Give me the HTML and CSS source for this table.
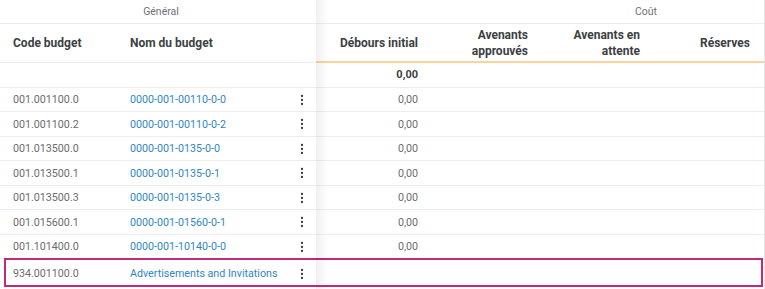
FILE: index.html
```html
<!DOCTYPE html>
<html lang="fr">
<head>
<meta charset="utf-8">
<title>Budget</title>
<link rel="stylesheet" href="styles.css">
</head>
<body>
<div class="grid">
  <div class="row group-row">
    <div class="g-general">Général</div>
    <div class="g-cout">Coût</div>
  </div>
  <div class="row head-row">
    <div class="cell c-code">Code budget</div>
    <div class="cell c-name">Nom du budget</div>
    <div class="cell c-menu"></div>
    <div class="cell c-num w-116">Débours initial</div>
    <div class="cell c-num w-110">Avenants<br>approuvés</div>
    <div class="cell c-num w-112">Avenants en<br>attente</div>
    <div class="cell c-num w-110">Réserves</div>
  </div>
  <div class="row total-row">
    <div class="cell c-code"></div>
    <div class="cell c-name"></div>
    <div class="cell c-menu"></div>
    <div class="cell c-num w-116">0,00</div>
    <div class="cell c-num w-110"></div>
    <div class="cell c-num w-112"></div>
    <div class="cell c-num w-110"></div>
  </div>

  <div class="row data-row">
    <div class="cell c-code">001.001100.0</div>
    <div class="cell c-name"><a class="link">0000-001-00110-0-0</a></div>
    <div class="cell c-menu"><svg class="kebab" width="4" height="12" viewBox="0 0 4 12"><circle cx="2" cy="2" r="1.15"/><circle cx="2" cy="6" r="1.15"/><circle cx="2" cy="10" r="1.15"/></svg></div>
    <div class="cell c-num w-116">0,00</div>
    <div class="cell c-num w-110"></div>
    <div class="cell c-num w-112"></div>
    <div class="cell c-num w-110"></div>
  </div>
  <div class="row data-row">
    <div class="cell c-code">001.001100.2</div>
    <div class="cell c-name"><a class="link">0000-001-00110-0-2</a></div>
    <div class="cell c-menu"><svg class="kebab" width="4" height="12" viewBox="0 0 4 12"><circle cx="2" cy="2" r="1.15"/><circle cx="2" cy="6" r="1.15"/><circle cx="2" cy="10" r="1.15"/></svg></div>
    <div class="cell c-num w-116">0,00</div>
    <div class="cell c-num w-110"></div>
    <div class="cell c-num w-112"></div>
    <div class="cell c-num w-110"></div>
  </div>
  <div class="row data-row">
    <div class="cell c-code">001.013500.0</div>
    <div class="cell c-name"><a class="link">0000-001-0135-0-0</a></div>
    <div class="cell c-menu"><svg class="kebab" width="4" height="12" viewBox="0 0 4 12"><circle cx="2" cy="2" r="1.15"/><circle cx="2" cy="6" r="1.15"/><circle cx="2" cy="10" r="1.15"/></svg></div>
    <div class="cell c-num w-116">0,00</div>
    <div class="cell c-num w-110"></div>
    <div class="cell c-num w-112"></div>
    <div class="cell c-num w-110"></div>
  </div>
  <div class="row data-row">
    <div class="cell c-code">001.013500.1</div>
    <div class="cell c-name"><a class="link">0000-001-0135-0-1</a></div>
    <div class="cell c-menu"><svg class="kebab" width="4" height="12" viewBox="0 0 4 12"><circle cx="2" cy="2" r="1.15"/><circle cx="2" cy="6" r="1.15"/><circle cx="2" cy="10" r="1.15"/></svg></div>
    <div class="cell c-num w-116">0,00</div>
    <div class="cell c-num w-110"></div>
    <div class="cell c-num w-112"></div>
    <div class="cell c-num w-110"></div>
  </div>
  <div class="row data-row">
    <div class="cell c-code">001.013500.3</div>
    <div class="cell c-name"><a class="link">0000-001-0135-0-3</a></div>
    <div class="cell c-menu"><svg class="kebab" width="4" height="12" viewBox="0 0 4 12"><circle cx="2" cy="2" r="1.15"/><circle cx="2" cy="6" r="1.15"/><circle cx="2" cy="10" r="1.15"/></svg></div>
    <div class="cell c-num w-116">0,00</div>
    <div class="cell c-num w-110"></div>
    <div class="cell c-num w-112"></div>
    <div class="cell c-num w-110"></div>
  </div>
  <div class="row data-row">
    <div class="cell c-code">001.015600.1</div>
    <div class="cell c-name"><a class="link">0000-001-01560-0-1</a></div>
    <div class="cell c-menu"><svg class="kebab" width="4" height="12" viewBox="0 0 4 12"><circle cx="2" cy="2" r="1.15"/><circle cx="2" cy="6" r="1.15"/><circle cx="2" cy="10" r="1.15"/></svg></div>
    <div class="cell c-num w-116">0,00</div>
    <div class="cell c-num w-110"></div>
    <div class="cell c-num w-112"></div>
    <div class="cell c-num w-110"></div>
  </div>
  <div class="row data-row">
    <div class="cell c-code">001.101400.0</div>
    <div class="cell c-name"><a class="link">0000-001-10140-0-0</a></div>
    <div class="cell c-menu"><svg class="kebab" width="4" height="12" viewBox="0 0 4 12"><circle cx="2" cy="2" r="1.15"/><circle cx="2" cy="6" r="1.15"/><circle cx="2" cy="10" r="1.15"/></svg></div>
    <div class="cell c-num w-116">0,00</div>
    <div class="cell c-num w-110"></div>
    <div class="cell c-num w-112"></div>
    <div class="cell c-num w-110"></div>
  </div>
  <div class="row data-row selected-row">
    <div class="cell c-code">934.001100.0</div>
    <div class="cell c-name"><a class="link">Advertisements and Invitations</a></div>
    <div class="cell c-menu"><svg class="kebab" width="4" height="12" viewBox="0 0 4 12"><circle cx="2" cy="2" r="1.15"/><circle cx="2" cy="6" r="1.15"/><circle cx="2" cy="10" r="1.15"/></svg></div>
    <div class="cell c-num w-116"></div>
    <div class="cell c-num w-110"></div>
    <div class="cell c-num w-112"></div>
    <div class="cell c-num w-110"></div>
  </div>

  <div class="pin-shadow"></div>
</div>
</body>
</html>
```

FILE: styles.css
```css
* { box-sizing: border-box; }

html, body {
  margin: 0;
  padding: 0;
  background: #ffffff;
}

body {
  font-family: Roboto, "Liberation Sans", sans-serif;
  font-size: 11px;
  color: #6a6d70;
}

.grid {
  position: relative;
  width: 765px;
  height: 289px;
  overflow: hidden;
  border-right: 1px solid #e7e8e8;
}

.row {
  display: flex;
  flex-wrap: nowrap;
  width: 100%;
}

.cell {
  display: flex;
  align-items: center;
  flex: none;
  white-space: nowrap;
}

/* group header row */
.group-row {
  height: 24px;
  border-bottom: 1px solid #ececec;
  font-size: 10.5px;
  color: #6e7174;
}
.g-general {
  flex: none;
  width: 316px;
  padding-left: 6px;
  display: flex;
  align-items: center;
  justify-content: center;
}
.g-cout {
  flex: none;
  width: 660px;
  display: flex;
  align-items: center;
  justify-content: center;
}

/* column widths */
.c-code { width: 130px; padding-left: 13px; }
.c-name { width: 155px; }
.c-menu { width: 31px; justify-content: center; padding-left: 2px; }
.c-num { justify-content: flex-end; text-align: right; padding-right: 14px; }
.w-116 { width: 116px; }
.w-110 { width: 110px; }
.w-112 { width: 112px; }

/* column header row */
.head-row .cell {
  height: 39px;
  font-weight: 700;
  font-size: 12px;
  line-height: 16px;
  color: #3b3f43;
  border-bottom: 1px solid #ececec;
}
.head-row .c-num {
  border-bottom: 2px solid #fbd39c;
}

/* totals row */
.total-row .cell {
  height: 24.5px;
  border-bottom: 1px solid #ededed;
  font-weight: 700;
  color: #3b3f43;
}

/* data rows */
.data-row .cell {
  height: 24.5px;
  border-bottom: 1px solid #ededed;
  padding-top: 1px;
  font-size: 10.7px;
}

.link {
  color: #2f87c3;
  text-decoration: none;
}

.kebab { fill: #3a3d40; display: block; }

.selected-row { position: relative; }
.selected-row .cell {
  height: 28px;
  border-bottom: none;
}
.selected-row::after {
  content: "";
  position: absolute;
  top: -1px;
  left: 4px;
  right: 1px;
  bottom: 0;
  border: 2px solid #c4287a;
  pointer-events: none;
}

.pin-shadow {
  position: absolute;
  top: 0;
  bottom: 0;
  left: 316px;
  width: 12px;
  background: linear-gradient(to right, rgba(0,0,0,0.06), rgba(0,0,0,0));
  pointer-events: none;
}
```
